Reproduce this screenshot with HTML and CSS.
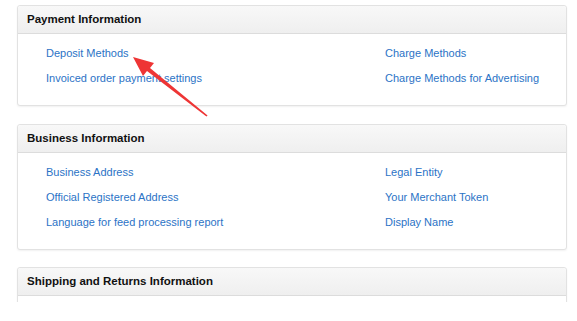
FILE: index.html
```html
<!DOCTYPE html>
<html lang="en">
  <head>
    <meta charset="UTF-8" />
    <meta name="viewport" content="width=device-width, initial-scale=1.0" />
    <title>Account Info</title>
    <link rel="stylesheet" href="styles.css">
  </head>
  <body>
    <div class="page">
      <div class="panel">
        <div class="panel-head">Payment Information</div>
        <div class="panel-body">
          <a href="#">Deposit Methods</a>
          <a href="#">Charge Methods</a>
          <a href="#">Invoiced order payment settings</a>
          <a href="#">Charge Methods for Advertising</a>
        </div>
      </div>

      <div class="panel">
        <div class="panel-head">Business Information</div>
        <div class="panel-body">
          <a href="#">Business Address</a>
          <a href="#">Legal Entity</a>
          <a href="#">Official Registered Address</a>
          <a href="#">Your Merchant Token</a>
          <a href="#">Language for feed processing report</a>
          <a href="#">Display Name</a>
        </div>
      </div>

      <div class="panel">
        <div class="panel-head">Shipping and Returns Information</div>
        <div class="panel-body"></div>
      </div>

      <!-- annotation arrow drawn over the page -->
      <svg class="arrow" width="577" height="321" viewBox="0 0 577 321">
        <polygon points="133,57 154,63 150,68 207.6,115.4 206.4,116.6 147,71 143,76" fill="#ee3535" />
      </svg>
    </div>
  </body>
</html>
```

FILE: styles.css
```css
* {
  padding: 0;
  margin: 0;
  box-sizing: border-box;
}
body {
  background: #fff;
  font-family: "Liberation Sans", Arial, sans-serif;
  font-size: 12px;
  color: #111;
}
.page {
  position: relative;
  width: 577px;
  height: 302px;
  overflow: hidden;
  padding: 5px 0 0 17px;
}
.panel {
  width: 550px;
  border: 1px solid #e2e2e2;
  border-radius: 3px;
  box-shadow: 0 1px 2px rgba(0, 0, 0, 0.06);
  margin-bottom: 17px;
  background: #fff;
}
.panel:first-child {
  margin-bottom: 18px;
}
.panel-head {
  height: 28px;
  line-height: 26px;
  padding-left: 9px;
  font-weight: bold;
  font-size: 11.5px;
  color: #111;
  background: linear-gradient(#f8f8f8, #efefef);
  border-bottom: 1px solid #dcdcdc;
  border-radius: 3px 3px 0 0;
}
.panel-body {
  display: grid;
  grid-template-columns: 339px 1fr;
  padding: 7px 0 14px 28px;
  min-height: 20px;
}
.panel-body a {
  line-height: 25px;
  color: #2b73c6;
  text-decoration: none;
  font-size: 11px;
}
.arrow {
  position: absolute;
  left: 0;
  top: 0;
}
```
